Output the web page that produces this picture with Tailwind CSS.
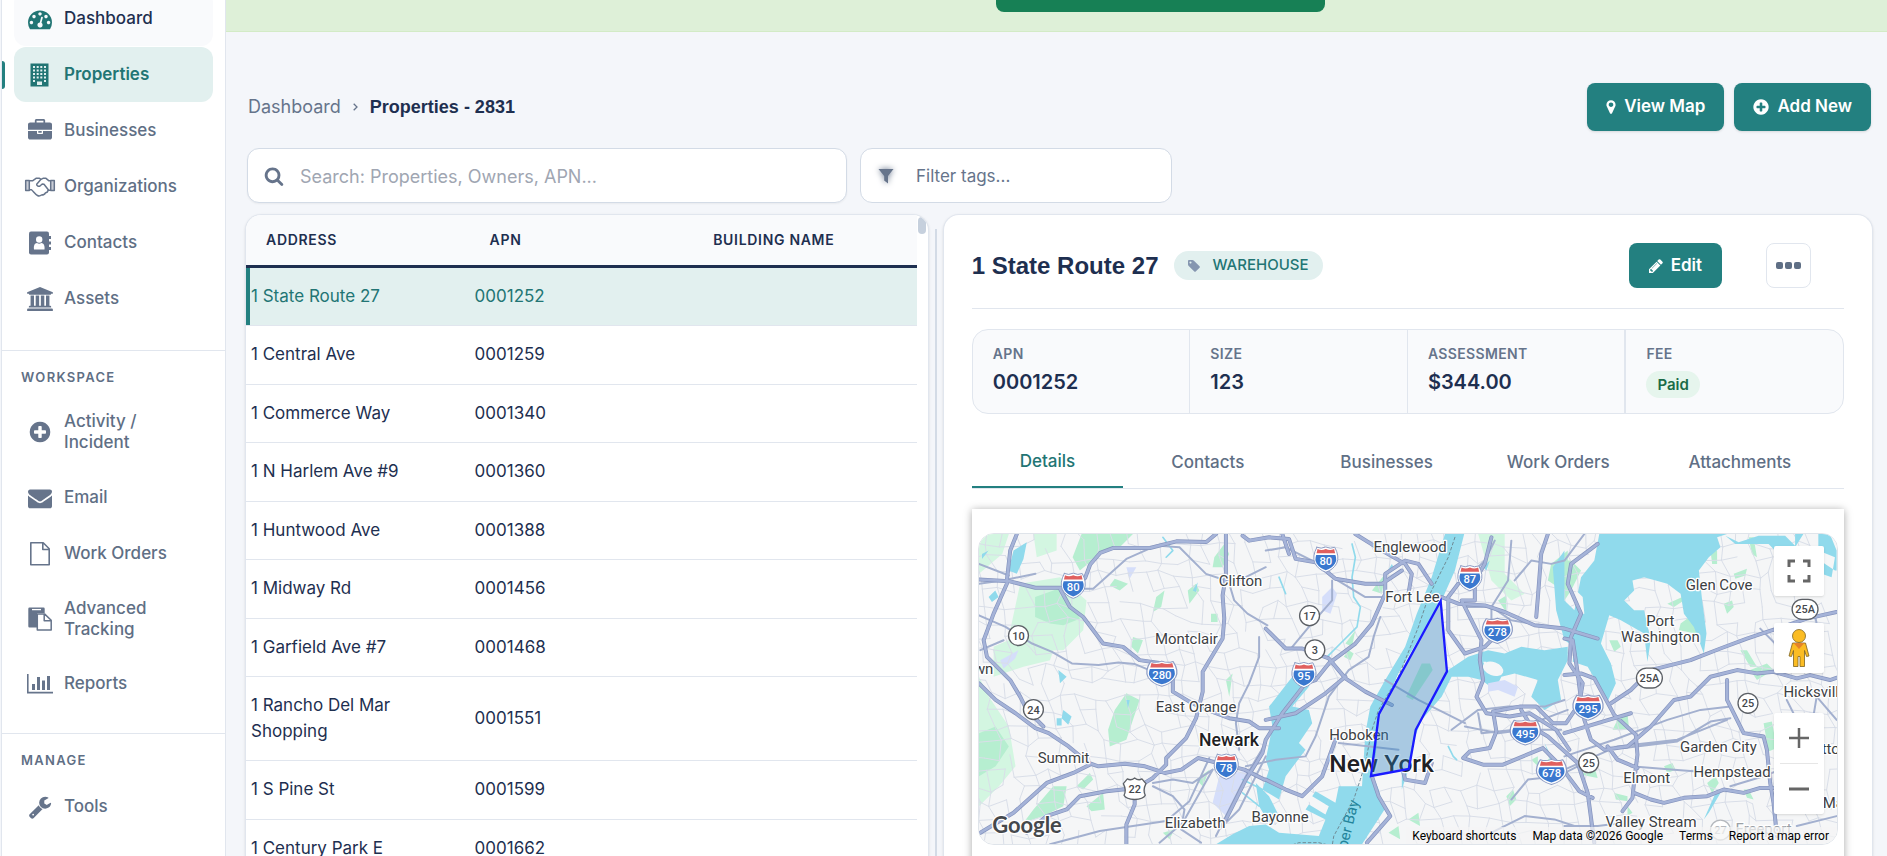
<!DOCTYPE html>
<html lang="en">
<head>
    <meta charset="UTF-8">
    <meta name="viewport" content="width=device-width, initial-scale=1.0">
    <title>Properties</title>
    <script src="https://cdn.jsdelivr.net/npm/@tailwindcss/browser@4"></script>
</head>
<body class="bg-[#f4f6fa] font-['Inter',sans-serif] text-[17px] text-[#1e2f50]">
<div class="flex h-screen overflow-hidden">

    <!-- Sidebar -->
    <aside class="ml-px flex w-[225px] shrink-0 flex-col border-x border-[#e1e6ee] bg-white text-[#5f6f85]">
        <nav class="-mt-[9px] flex flex-col gap-px pr-3 pl-3 font-medium leading-[21px]">
            <a href="#" class="flex min-h-[55px] items-center gap-3 rounded-xl bg-[#f9fafc] px-3.5 text-[#1e2f50]">
                <svg class="h-6 w-6 shrink-0 fill-[#227574]" viewBox="0 0 1792 1792"><path d="M384 1152q0-53-37.500-90.500t-90.500-37.500-90.500 37.500-37.500 90.500 37.500 90.500 90.500 37.500 90.500-37.500 37.500-90.500zm192-448q0-53-37.500-90.500t-90.500-37.500-90.500 37.500-37.500 90.500 37.500 90.500 90.500 37.500 90.500-37.500 37.500-90.500zm428 481l101-382q6-26-7.500-48.500t-38.500-29.500-48 6.500-30 39.500l-101 382q-60 5-107 43.500t-63 98.500q-20 77 20 146t117 89 146-20 89-117q16-60-6-117t-72-91zm660-33q0-53-37.500-90.500t-90.500-37.500-90.500 37.500-37.500 90.500 37.500 90.500 90.500 37.500 90.500-37.500 37.500-90.500zm-640-640q0-53-37.500-90.500t-90.500-37.500-90.500 37.500-37.500 90.500 37.500 90.500 90.500 37.500 90.500-37.500 37.500-90.500zm448 192q0-53-37.500-90.500t-90.500-37.500-90.500 37.500-37.500 90.500 37.500 90.500 90.500 37.500 90.500-37.500 37.500-90.500zm320 448q0 261-141 483-19 29-54 29h-1402q-35 0-54-29-141-221-141-483 0-182 71-348t191-286 286-191 348-71 348 71 286 191 191 286 71 348z"/></svg>
                Dashboard
            </a>
            <a href="#" class="relative flex min-h-[55px] items-center gap-3 rounded-xl bg-[#e2f0ef] px-3.5 font-semibold text-[#227574]">
                <span class="absolute top-3.5 -left-3 h-7 w-[3px] rounded-r bg-[#238080]"></span>
                <svg class="h-6 w-6 shrink-0 fill-[#227574]" viewBox="0 0 24 24"><path fill-rule="evenodd" d="M2.500 0.500h18v23h-18zM5 3v2h2V3zM8.700 3v2h2V3zM12.300 3v2h2V3zM16 3v2h2V3zM5 6.500v2h2v-2zM8.700 6.500v2h2v-2zM12.300 6.500v2h2v-2zM16 6.500v2h2v-2zM5 10v2h2v-2zM8.700 10v2h2v-2zM12.300 10v2h2v-2zM16 10v2h2v-2zM5 13.500v2h2v-2zM8.700 13.500v2h2v-2zM12.300 13.500v2h2v-2zM16 13.500v2h2v-2zM5 17v2h2v-2zM16 17v2h2v-2zM9 18.500v3.500h5v-3.500z"/></svg>
                Properties
            </a>
            <a href="#" class="flex min-h-[55px] items-center gap-3 px-3.5">
                <svg class="h-6 w-6 shrink-0 fill-[#66748b]" viewBox="0 0 1792 1792"><path d="M640 256h512v-128h-512v128zm1152 640v480q0 66-47 113t-113 47h-1472q-66 0-113-47t-47-113v-480h672v160q0 26 19 45t45 19h320q26 0 45-19t19-45v-160h672zm-768 0v128h-256v-128h256zm768-480v384h-1792v-384q0-66 47-113t113-47h352v-160q0-40 28-68t68-28h576q40 0 68 28t28 68v160h352q66 0 113 47t47 113z"/></svg>
                Businesses
            </a>
            <a href="#" class="flex min-h-[55px] items-center gap-3 px-3.5">
                <svg class="h-6 w-6 shrink-0 overflow-visible" viewBox="0 0 24 24" fill="none" stroke="#66748b" stroke-width="1.500" stroke-linejoin="round"><path d="M-2.300 5.500h3.600v10h-3.600zM22.700 5.500h3.600v10h-3.600z" fill="#66748b" fill-opacity=".35"/><path d="M1 5.800h3.500l3.500-2.500h3.500l1.500 1L15 3.300h3l3 2.500h2M1 14.800h2.500c2 1.700 3.500 4.500 6 5.700 1.500.8 3 .3 4-.5 2.500 0 3.500-.8 4-2.300 1.500 0 2.300-1 2.500-2.400h3M13 4.300l-4.300 5c-.4 1 1.700 2.400 3 1.900l2.500-2.200 1.800.2 4.500 5.800"/></svg>
                Organizations
            </a>
            <a href="#" class="flex min-h-[55px] items-center gap-3 px-3.5">
                <svg class="h-6 w-6 shrink-0" viewBox="0 0 24 24"><rect x="1" y="0.500" width="20" height="23" rx="2" fill="#66748b"/><path d="M20 5h3v3h-3zM20 10.500h3v3h-3zM20 16h3v3h-3z" fill="#66748b"/><path d="M6 18.500c-.5-4 .7-6.300 3-6.500 1.300 1 3 1 4.300 0 2.300.2 3.700 2.500 3.200 6.500z" fill="#fff"/><circle cx="11.200" cy="8.500" r="3.200" fill="#fff"/></svg>
                Contacts
            </a>
            <a href="#" class="flex min-h-[55px] items-center gap-3 px-3.5">
                <svg class="h-6 w-6 shrink-0 overflow-visible fill-[#66748b]" viewBox="64 0 1792 1792"><path d="M960 0l960 384v128h-128q0 26-20.500 45t-48.500 19h-1526q-28 0-48.500-19t-20.500-45h-128v-128zm-704 640h256v768h128v-768h256v768h128v-768h256v768h128v-768h256v768h59q28 0 48.500 19t20.500 45v64h-1664v-64q0-26 20.500-45t48.500-19h59v-768zm1595 960q28 0 48.500 19t20.500 45v128h-1920v-128q0-26 20.500-45t48.500-19h1782z"/></svg>
                Assets
            </a>
        </nav>

        <div class="mt-6 border-t border-[#e1e6ee] px-[19px] pt-4 pb-1.5 text-[13px] leading-[21px] font-semibold tracking-widest">WORKSPACE</div>
        <nav class="flex flex-col gap-px pr-3 pl-3 font-medium leading-[21px]">
            <a href="#" class="flex min-h-[75px] items-center gap-3 px-3.5">
                <svg class="h-6 w-6 shrink-0 fill-[#66748b]" viewBox="0 0 1792 1792"><path d="M1344 960v-128q0-26-19-45t-45-19h-256v-256q0-26-19-45t-45-19h-128q-26 0-45 19t-19 45v256h-256q-26 0-45 19t-19 45v128q0 26 19 45t45 19h256v256q0 26 19 45t45 19h128q26 0 45-19t19-45v-256h256q26 0 45-19t19-45zm320-64q0 209-103 385.500t-279.500 279.500-385.500 103-385.500-103-279.500-279.500-103-385.500 103-385.500 279.500-279.500 385.500-103 385.500 103 279.500 279.500 103 385.500z"/></svg>
                <span>Activity /<br>Incident</span>
            </a>
            <a href="#" class="flex min-h-[55px] items-center gap-3 px-3.5">
                <svg class="h-6 w-6 shrink-0 fill-[#66748b]" viewBox="0 0 1792 1792"><path d="M1792 710v794q0 66-47 113t-113 47h-1472q-66 0-113-47t-47-113v-794q44 49 101 87 362 246 497 345 57 42 92.500 65.500t94.500 48 110 24.500h2q51 0 110-24.500t94.500-48 92.500-65.500q170-123 498-345 57-39 100-87zm0-294q0 79-49 151t-122 123q-376 261-468 325-10 7-42.500 31t-54 38.500-52 32.500-57.500 27-50 9h-2q-23 0-50-9t-57.500-27-52-32.500-54-38.500-42.500-31q-91-64-262-182.500t-205-142.500q-62-42-117-115.500t-55-136.500q0-78 41.500-130t118.500-52h1472q65 0 112.500 47t47.500 113z"/></svg>
                Email
            </a>
            <a href="#" class="flex min-h-[55px] items-center gap-3 px-3.5">
                <svg class="h-6 w-6 shrink-0" viewBox="0 0 24 24" fill="none" stroke="#66748b" stroke-width="1.600" stroke-linejoin="round"><path d="M2.800 0.800h12.400l6 6v16H2.800zM14.800 1v6.500H21"/></svg>
                Work Orders
            </a>
            <a href="#" class="flex min-h-[73px] items-center gap-3 px-3.5">
                <svg class="h-6 w-6 shrink-0" viewBox="0 0 24 24"><path d="M1.500 0.500h14q1.200 0 1.200 1.200V6H10q-1 0-1 1v13.500H1.500Q.3 20.500.3 19.300V1.700Q.3.500 1.500.5z" fill="#66748b"/><path d="M4 2.600h9" stroke="#fff" stroke-width="1.300"/><path d="M9.300 6.900h7.200l6.700 6.300v9.900H9.300zM16.200 7.200v6.500h6.800" fill="#fff" stroke="#66748b" stroke-width="1.500" stroke-linejoin="round"/></svg>
                <span>Advanced<br>Tracking</span>
            </a>
            <a href="#" class="flex min-h-[55px] items-center gap-3 px-3.5">
                <svg class="h-6 w-6 shrink-0 overflow-visible fill-[#66748b]" viewBox="0 0 24 24"><path d="M-1 2h1.600v17.700H25v1.700H-1zM4 12h3v6H4zM9 5h3v13H9zM14 8.500h3V18h-3zM19 4h3v14h-3z"/></svg>
                Reports
            </a>
        </nav>

        <div class="mt-[22px] border-t border-[#e1e6ee] px-[19px] pt-4 pb-2 text-[13px] leading-[21px] font-semibold tracking-widest">MANAGE</div>
        <nav class="flex flex-col pr-3 pl-3 font-medium leading-[21px]">
            <a href="#" class="flex min-h-[55px] items-center gap-3 px-3.5">
                <svg class="h-6 w-6 shrink-0 fill-[#66748b]" viewBox="0 0 1792 1792"><path d="M448 1472q0-26-19-45t-45-19-45 19-19 45 19 45 45 19 45-19 19-45zm644-420l-682 682q-37 37-90 37-52 0-91-37l-106-108q-38-36-38-90 0-53 38-91l681-681q39 98 114.500 173.500t173.500 114.500zm634-435q0 39-23 106-47 134-164.500 217.500t-258.500 83.500q-185 0-316.500-131.500t-131.500-316.500 131.500-316.500 316.500-131.500q58 0 121.500 16.500t107.500 46.500q16 11 16 28t-16 28l-293 169v224l193 107q5-3 79-48.500t135.500-81 70.500-35.500q15 0 23.500 10t8.500 25z"/></svg>
                Tools
            </a>
        </nav>
    </aside>

    <!-- Main -->
    <main class="flex min-w-0 flex-1 flex-col">
        <div class="flex h-8 shrink-0 items-start justify-center border-b border-[#d3ebc6] bg-[#def0d8] pl-52">
            <button type="button" aria-label="Notice" class="h-3 w-[329px] rounded-b-lg bg-[#178055]"></button>
        </div>

        <header class="mt-[51px] flex h-12 shrink-0 items-center justify-between pr-4 pl-[22px]">
            <div class="flex items-center gap-3">
                <a href="#" class="text-lg leading-6 text-[#66748b]">Dashboard</a>
                <svg class="h-2 w-[5px]" viewBox="0 0 5 8" fill="none" stroke="#66748b" stroke-width="1.300"><path d="M.7.7L4 4 .7 7.300"/></svg>
                <h1 class="font-['Liberation_Sans',sans-serif] text-lg leading-6 font-bold">Properties - 2831</h1>
            </div>
            <div class="flex gap-2.5 font-semibold text-white">
                <button type="button" class="flex h-12 items-center gap-2 rounded-lg bg-[#238080] px-[19px] shadow-sm">
                    <svg class="h-4 w-2.5 fill-white" viewBox="384 0 1024 1792"><path d="M1152 640q0-106-75-181t-181-75-181 75-75 181 75 181 181 75 181-75 75-181zm256 0q0 109-33 179l-364 774q-16 33-47.500 52t-67.500 19-67.500-19-46.500-52l-365-774q-33-70-33-179 0-212 150-362t362-150 362 150 150 362z"/></svg>
                    View Map
                </button>
                <button type="button" class="flex h-12 items-center gap-2 rounded-lg bg-[#238080] px-[19px] shadow-sm">
                    <svg class="h-4 w-4 fill-white" viewBox="96 96 1600 1600"><path d="M1344 960v-128q0-26-19-45t-45-19h-256v-256q0-26-19-45t-45-19h-128q-26 0-45 19t-19 45v256h-256q-26 0-45 19t-19 45v128q0 26 19 45t45 19h256v256q0 26 19 45t45 19h128q26 0 45-19t19-45v-256h256q26 0 45-19t19-45zm320-64q0 209-103 385.500t-279.500 279.500-385.500 103-385.500-103-279.500-279.500-103-385.500 103-385.500 279.500-279.500 385.500-103 385.500 103 279.500 279.500 103 385.500z"/></svg>
                    Add New
                </button>
            </div>
        </header>

        <div class="mt-[17px] flex h-[55px] shrink-0 gap-[13px] pl-[21px]">
            <label class="flex w-[600px] items-center rounded-xl border border-[#d3dbe6] bg-white pl-4 shadow-xs">
                <svg class="h-5 w-5 shrink-0 fill-[#66748b]" viewBox="0 0 1792 1792"><path d="M1216 832q0-185-131.500-316.500t-316.500-131.500-316.500 131.500-131.500 316.500 131.500 316.500 316.500 131.500 316.500-131.500 131.500-316.500zm512 832q0 52-38 90t-90 38q-54 0-90-38l-343-342q-179 124-399 124-143 0-273.500-55.500t-225-150-150-225-55.500-273.500 55.500-273.500 150-225 225-150 273.500-55.500 273.500 55.500 225 150 150 225 55.500 273.500q0 220-124 399l343 343q37 37 37 90z"/></svg>
                <span class="sr-only">Search</span>
                <input type="text" placeholder="Search: Properties, Owners, APN..." class="ml-4 h-full w-full bg-transparent pt-0.5 text-lg outline-none placeholder:text-[#a0a6b2]">
            </label>
            <label class="flex w-[312px] items-center rounded-xl border border-[#d3dbe6] bg-white pl-[17px]">
                <svg class="h-4 w-4 shrink-0 fill-[#66748b] drop-shadow-[0_0_3px_#66748b]" viewBox="0 0 16 16"><path d="M.5 1h15L10 8v7.500L6.200 12.500V8z"/></svg>
                <span class="sr-only">Filter tags</span>
                <input type="text" placeholder="Filter tags..." class="ml-[22px] h-full w-full bg-transparent outline-none placeholder:text-[#66748b]">
            </label>
        </div>

        <div class="mt-[11px] flex min-h-0 flex-1 pr-3.5 pl-[19px]">

            <!-- Property list -->
            <section class="relative w-[42%] shrink-0 overflow-hidden rounded-t-2xl border-x border-t border-[#e1e6ee] bg-white pr-[11px] shadow-sm">
                <table class="w-full table-fixed border-collapse text-left">
                    <thead>
                        <tr class="h-[51px] border-b-[3px] border-[#1e2f50] bg-[#f9fafc] text-sm font-semibold tracking-wider">
                            <th class="px-5 font-semibold">ADDRESS</th>
                            <th class="px-5 font-semibold">APN</th>
                            <th class="px-5 font-semibold">BUILDING NAME</th>
                        </tr>
                    </thead>
                    <tbody id="rows"></tbody>
                </table>
                <div class="absolute top-0.5 right-0.5 h-[17px] w-2 rounded-full bg-[#c6d0dd]"></div>
            </section>

            <div class="flex w-3.5 shrink-0 justify-center pt-[15px]"><div class="w-0.5 bg-[#d3dbe6]"></div></div>

            <!-- Property details -->
            <section class="min-w-0 flex-1 overflow-hidden rounded-t-2xl border-x border-t border-[#e1e6ee] bg-white px-7 shadow-sm">
                <div class="flex h-[94px] items-center border-b border-[#e1e6ee] pt-2">
                    <h2 class="font-['Liberation_Sans',sans-serif] text-2xl font-bold">1 State Route 27</h2>
                    <span class="ml-4 flex h-[29px] items-center gap-3 rounded-full bg-[#e2f0ef] px-3.5 text-[15px] font-medium text-[#227574]">
                        <svg class="h-3 w-3 fill-[#8596b0]" viewBox="128 128 1536 1536"><path d="M576 448q0-53-37.500-90.500t-90.500-37.500-90.500 37.500-37.500 90.500 37.500 90.500 90.500 37.500 90.500-37.500 37.500-90.500zm1067 576q0 53-37 90l-491 492q-39 37-91 37-53 0-90-37l-715-716q-38-37-64.500-101t-26.500-117v-416q0-52 38-90t90-38h416q53 0 117 26.500t102 64.500l715 714q37 39 37 91z"/></svg>
                        WAREHOUSE
                    </span>
                    <button type="button" class="ml-auto flex h-[45px] items-center gap-2 rounded-lg bg-[#238080] px-5 font-semibold text-white">
                        <svg class="h-3.5 w-3.5 fill-white" viewBox="128 128 1536 1536"><path d="M491 1536l91-91-235-235-91 91v107h128v128h107zm523-928q0-22-22-22-10 0-17 7l-542 542q-7 7-7 17 0 22 22 22 10 0 17-7l542-542q7-7 7-17zm-54-192l416 416-832 832h-416v-416zm683 96q0 53-37 90l-166 166-416-416 166-165q36-38 90-38 53 0 91 38l235 234q37 39 37 91z"/></svg>
                        Edit
                    </button>
                    <button type="button" aria-label="More" class="mr-[33px] ml-11 flex h-[45px] w-[45px] items-center justify-center rounded-lg border border-[#e1e6ee]">
                        <svg class="h-[7px] w-[25px] fill-[#5f6f85]" viewBox="0 0 25 7"><rect width="7" height="7" rx="2"/><rect x="9" width="7" height="7" rx="2"/><rect x="18" width="7" height="7" rx="2"/></svg>
                    </button>
                </div>

                <dl class="mt-5 grid h-[85px] grid-cols-4 divide-x divide-[#e1e6ee] rounded-2xl border border-[#e1e6ee] bg-[#f9fafc]">
                    <div class="px-5 pt-3.5"><dt class="text-sm leading-5 font-semibold tracking-wide text-[#66748b]">APN</dt><dd class="mt-1 text-xl leading-7 font-semibold">0001252</dd></div>
                    <div class="px-5 pt-3.5"><dt class="text-sm leading-5 font-semibold tracking-wide text-[#66748b]">SIZE</dt><dd class="mt-1 text-xl leading-7 font-semibold">123</dd></div>
                    <div class="px-5 pt-3.5"><dt class="text-sm leading-5 font-semibold tracking-wide text-[#66748b]">ASSESSMENT</dt><dd class="mt-1 text-xl leading-7 font-semibold">$344.00</dd></div>
                    <div class="border-l border-[#e1e6ee] px-5 pt-3.5"><dt class="text-sm leading-5 font-semibold tracking-wide text-[#66748b]">FEE</dt><dd class="mt-[7px] flex"><span class="rounded-full bg-[#e6f5ed] px-[11px] text-[15px] leading-[27px] font-semibold text-[#1a6b48]">Paid</span></dd></div>
                </dl>

                <div role="tablist" class="mt-5 flex h-[55px] border-b border-[#e1e6ee] font-medium text-[#5f6f85]">
                    <button type="button" role="tab" aria-selected="true" class="border-b-2 border-[#238080] px-12 pt-1 text-[#227574]">Details</button>
                    <button type="button" role="tab" class="px-12 pt-1">Contacts</button>
                    <button type="button" role="tab" class="px-12 pt-1">Businesses</button>
                    <button type="button" role="tab" class="px-[26px] pt-1">Work Orders</button>
                    <button type="button" role="tab" class="flex-1 pt-1">Attachments</button>
                </div>

                <div class="mt-5 h-[400px] bg-white px-1.5 pt-6 shadow-[0_1px_8px_rgba(0,0,0,0.35)]">
                    <div class="relative h-[312px] overflow-hidden rounded-2xl border border-[#dfe4ea]">
                        <svg class="block h-full w-full" viewBox="36 99 2586 936" preserveAspectRatio="xMidYMid slice" stroke-linejoin="round" stroke-linecap="round">
                            <defs>
                                <g id="interstate">
                                    <path d="M-27-36Q-14-30 0-37 14-30 27-36 42-8 33 12 22 32 0 39-22 32-33 12-42-8-27-36z" fill="#fff" stroke="#8d9cc4" stroke-width="3"/>
                                    <path d="M-29-13H29Q34 2 28 12 19 27 0 33-19 27-28 12-34 2-29-13z" fill="#3a78cf"/>
                                    <path d="M-25-31Q-13-25 0-31 13-25 25-31L28-18H-28z" fill="#e0605f"/>
                                </g>
                            </defs>
                            <rect x="0" y="0" width="2700" height="1100" fill="#f5f6f7"/>

                            <!-- parks -->
                            <g fill="#d3f6e1">
                                <path d="M36 100h90l-20 60-70 60zM160 250l120-20 80 70-10 90-60 60-90 0-70-60zM80 440l90-40 100 20-20 60-80 20-90 30z"/>
                                <path d="M36 530l30 60 60 90 20 120-50 60-60 60zM200 100h70v50l-60 20zM1540 100h80v120l60 60-40 20-60-60zM1700 500l60 50-30 20z"/>
                            </g>
                            <g fill="#b6eed0">
                                <path d="M345 100h155l-40 40-60 20-60 50-22-40zM205 290l70-25 50 60 15 30-50 20-40-5-45-20zM36 700l50-20 40 60-40 60-50 30zM200 930l60-70 40 0-10 60-60 30-60 20zM480 580l40 20-20 60-20 60-50 20-5-50 20-60z"/>
                                <path d="M445 235l40 15-25 20-30-15zM570 290l25-20-10 50-25 15zM665 270l25-20 10 20-30 40zM745 170l30-40 15 30-20 40-30 0zM735 340h20v25h-20zM500 410l30 10-15 40-20-20zM780 540l20-20-10 70zM330 860l40-40 10 20-30 30zM360 920l50-40 5 50-40 5zM690 840l40-30-20 50zM590 1000l35-10-15 30z"/>
                                <path d="M1150 450l15 10-10 20-20-10zM1140 430l30-40-10 50zM1220 270l40-50-10 60zM1600 300l25-15v50zM1625 890l20-20 10 30-20 20zM1700 780l20-10v30zM1740 790l20-20-5 50zM1850 800l40 0 10 35-50-10zM1270 1000l30-20 5 40zM1330 960l30-20 5 40zM1760 190l50-40v130l-60-40z"/>
                                <path d="M2110 310l45-20 5 10-30 20zM2150 370l40-30 15 50-10 10-50-10zM2310 220l40-15-5 20-30 10zM2355 110l15 0 10 60-15-10zM2240 150l20 0 0 40-15 0zM2280 310l25-10 5 20-20 20zM2330 450l20 0 30 50-20 0zM2360 510l50-20 20 20-50 30zM2400 670l25-5 15 80-25 10zM1935 420l25 0 10 20-20 15zM1960 660l30-20 5 50-50 0zM2100 800l25-10 10 20-25 10zM1950 880l40 10v15l-35-5zM1990 920l15 20-15 10zM2340 870l15 0 15 30-20-5zM2230 850l25-20 10 20-20 30zM1800 180l20 0 30 30-30 60-20 30zM1885 270l15-10 0 50z"/>
                            </g>
                            <g fill="#d5defa">
                                <path d="M760 830l90-20-70 140-40-40zM480 200l30 0-20 35zM100 480l55-30-10 25-35 30z"/>
                                <path d="M1070 290l30-30 15 20-20 60-25-10z"/>
                            </g>

                            <!-- local streets, filled in by the script below -->
                            <path id="streets" d="" fill="none" stroke="#d9dee8" stroke-width="3"/>

                            <!-- water -->
                            <g fill="#90daec">
                                <path d="M1440 100H1498L1470 210 1430 300 1300 520 1240 650 1235 740 1222 825 1240 870 1258 930 1190 1035H750L800 1005 850 980 900 975 940 1000 1060 1010 1080 960 1020 930 1030 915 1080 945 1090 920 1040 890 1050 875 1110 910 1120 860 1190 860 1200 700 1215 620 1260 540 1320 440 1355 340 1400 230z"/>
                                <path d="M980 530l40-10 10 40-50 60 50 10 10 40-40 60 20 20-60 80-20 70-50-30 20-60-10-30 20-100-10-60zM870 850l40 40 30 60-30 20-30-50z"/>
                                <path d="M1310 820l30-130 60-90 50-90 60-40 60-20 50 10 50-20 70 10 70-10v40l-30 60 10 60-50 30-20-20-20-20 20-50-70-20-40 10-20 40-40-30-40-10-50 0-30 60-60 70-20 50-20 100-20 60z"/>
                                <path d="M1905 100H2290L2260 110 2270 140 2235 170 2205 210 2215 300 2228 400 2220 460 2190 380 2160 340 2150 280 2110 250 2040 230 2005 240 2010 270 1980 300 2010 330 2040 330 2060 420 2050 485 2040 400 1970 360 1935 345 1910 430 1940 490 1955 550 1930 605 1905 560 1870 500 1825 485 1830 440 1800 420 1775 330 1765 200 1800 150 1800 300 1830 330 1850 230 1890 180z"/>
                                <path d="M2285 105l40 20 60-20 80 0 30 30 0-40 70 5v50l50 20-10 60-30-10-10-60-60-10-40 30-50-50-100 0zM2495 140l60 30 60 40 5 0v-60l-20-50h-80z"/>
                                <path d="M140 150l40-25-10 50-20 45-25-10zM65 290l20-20 10 20-20 15zM275 510l25 20-20 20zM290 630l25 20-10 25-20-20zM270 655l15 0v22h-15zM45 160l20-10-20 25zM680 270l15-25-5 30zM480 600l10 0-5 25z"/>
                                <path d="M1740 730l30 60-10 0zM2220 960l40-90 10 10-35 60zM1250 240l30-50 5 10zM1555 200l20-20-10 30z"/>
                            </g>
                            <g fill="none" stroke="#90daec" stroke-width="5">
                                <path d="M1160 130l10 40-10 60 5 60 20 30-10 60-50 50-40 40M830 880l50 40M830 840l60 30M590 110l30 40-20 20M1450 740l15 30 10 10M940 230l20 50"/>
                            </g>
                            <g fill="#f5f6f7"><ellipse cx="1585" cy="506" rx="32" ry="20" transform="rotate(20 1585 506)"/><path d="M1835 270l20 20 5 50-10 0-20-40zM1850 170l15-15-5 30-10 0zM1555 485l10 0-5 12z"/></g>
                            <path d="M1570 550l50-10 40 20-10 30-50-20-30 5z" fill="#d5defa"/>

                            <!-- Manhattan -->
                            <path d="M1428 300L1445 520 1350 690 1325 810 1225 825 1235 740 1245 650 1300 520z" fill="#eef0f3"/>
                            <path d="M1370 490l25 0 8 20-60 90-20-10z" fill="#b6eed0"/>

                            <path d="M1470 110l-20 60-60 120-30 90-60 150-60 100-20 60-20 100-15 50-20 60-60 110-5 30-40-10-60 0-60 20" fill="none" stroke="#6f8a94" stroke-width="3" stroke-dasharray="8 8"/>

                            <!-- secondary roads -->
                            <g fill="none" stroke="#a3b0cf" stroke-width="6">
                                <path d="M36 345l80 35 80 50 60 25 60 35 80 5 60-8 50 5 60 25 40-10M40 450l70-30M355 265h25l100-90 90-40 70 5 80 80 60 20 40 0 80-40"/>
                                <path d="M36 190l90 35M36 250l70-10 100-20M560 860l60 30 35 40-10 60 60 40M250 1035l150-40 200-30 70-60 60-130M790 250l15 50 40 40 60 35M880 410l0 60-30 80-30 60-10 60 10 80"/>
                                <path d="M560 850l60-10 60 10 60-40M740 810l-90 160-70 60M900 730l-60 100-90 180M900 770l-80 160-60 60"/>
                                <path d="M900 150l60-10 80 40 60 50 100 60 60 0M1100 240l0 60-70 80-50 60M1245 350l-20 60-15 60-60 40-60 80-40 120-30 60-90 10-90 20M1500 240l60-60 30-60M1500 320l80 0 60 40 60 10"/>
                                <path d="M1460 690l80-60 90-10 110 0 60-20M1540 640l10 60 100-10 160-60M1500 680l100 20 80-10 110 0M1260 540l100 60 80 40 60 30M1120 730l180 20M1580 1000l100-50 90 10 60 20"/>
                                <path d="M1800 770l150-50 160-60 100-30 90-10M1800 810l160-70 180-20 150-60M1640 900l50-60 90-10 60-30M1980 745l160-20 100-60 60-10M2390 385l50 50M2470 600l30 60M2620 660l-60-70M2500 790l-100 40-100 30M2000 800l130 10 60 5M2500 980l120-30M2550 650l10-60 40-30"/>
                                <path d="M2560 370l-10-50M1800 980h100l80-10M1640 120l-10 120-50 80 0 60M1860 100l-60 80-40 10-60-10-50 60"/>
                            </g>

                            <!-- highways -->
                            <g id="highways" fill="none">
                                <g stroke="#8493bd" stroke-width="12">
                                    <path id="hw1" d="M36 237l90 5 80 20 70 0 50 0 30-30 15-40 30-35 40-15h110l80-20 90 2 30-25M150 100l-20 50-10 90 0 10-40 90-30 80 10 50 70 70 30 50 20 40 50 50M36 550l50 50 60 40 60 45 40 15 60 40 60 50 30 10 80-8 60 8 60 20 50-10 50-35 60 15 80 20 60 30M280 265l30 55 40 30 60 80 60 10 50 40 70 10 30 40 0 45 50 30 40 20 80 30 60 10 30 20 60 0M40 1000l100-60 100-90 80-30 50-25M180 1000l60-50 60-20 40-40 80-15 90-10 50-30 40-40 0-20 60-60 30-60 20-80 0-60 60-100 5-60-5-70 10-60 0-160M480 1035l0-60 25-60 0-30"/>
                                    <path id="hw2" d="M780 960l60-120 50-80 10-40 50-80 70-90 30-10 40-50 80-60 50-60 40-90 0-60 60-40 40 10 40 60M830 105l20 15 60-10 60 5 20 60 60 10 60 50 90 15 50 0 60-40M1170 100l80 50 70 40 20 30-10 60M950 100l20 60M900 385l60 60 50 0 80 30 50 60 60 40 80 40M900 840l60 30 50 20 60-60 40-110M900 660l90-20 90-60 60-50M1580 110l-20 80-30 50 0 60-40 0 60 120-5 60 10 60-20 50 30 50 70 10 60-10 80 50 40 60"/>
                                    <path id="hw3" d="M1430 290l50 20 80 5 60 20 90 40 90 10 100 30M1480 250l-30 40 0 100 50 70 60-20 40-40M1750 100l-20 60-10 130-5 60M1900 130l-80 60-10 60 40 90-30 70-5 80 40 60-10 60-40 60-40 0-50-50-50 0-80 15 10 60-20 50-60 10-20 20 60 20 60 0 120-50 50 50 60 80 40 20M1670 630l30 50 50 30 90 80 30 90 20 150M1310 800l10 40 60 10 20-60M1220 830l20 60 35 60 -70 80"/>
                                    <path id="hw4" d="M1800 415l25 5 15 100 10 80 10 60 20 60 40 30 70-10 70-60 70-80 50-10 60-60 80-20 60 10 50-5 70 20 40-10 60 15 60-20 100-10 60-20M1800 525l50-5 40 15 60 110 65 60 5 60-10 80-5 50-30 40M1940 610l60-40 60-60 120-30 90-35 80-30 60-20 60-20 60-20 90-20M2290 540l0 60 20 40 30 60 60 10 10 40 10 100 10 60 10 100M2010 880l50 20 40 10 60-15 70-5 50-20 60 10 50-15 70 0M1800 700l100-30 100-30M1930 740l30 40 60 25"/>
                                </g>
                                <g stroke="#a5b3d8" stroke-width="8"><use href="#hw1"/><use href="#hw2"/><use href="#hw3"/><use href="#hw4"/></g>
                            </g>

                            <!-- place names -->
                            <g class="font-['Roboto',sans-serif]" fill="#3c4043" font-size="45" text-anchor="middle" stroke="#fff" stroke-width="8" paint-order="stroke">
                                <text x="824" y="258">Clifton</text>
                                <text x="661" y="432">Montclair</text>
                                <text x="690" y="635">East Orange</text>
                                <text x="789" y="740" font-size="53" font-weight="500" fill="#202124">Newark</text>
                                <text x="291" y="789">Summit</text>
                                <text x="687" y="985">Elizabeth</text>
                                <text x="943" y="969">Bayonne</text>
                                <text x="50" y="521">wn</text>
                                <text x="1335" y="153">Englewood</text>
                                <text x="1342" y="306">Fort Lee</text>
                                <text x="1181" y="722">Hoboken</text>
                                <text x="1249" y="816" font-size="74" font-weight="500" fill="#202124">New York</text>
                                <text x="2266" y="270">Glen Cove</text>
                                <text x="2089" y="378">Port</text>
                                <text x="2089" y="424">Washington</text>
                                <text x="2460" y="591" text-anchor="start">Hicksville</text>
                                <text x="2264" y="757">Garden City</text>
                                <text x="2305" y="833">Hempstead</text>
                                <text x="2048" y="850">Elmont</text>
                                <text x="2061" y="982">Valley Stream</text>
                                <text x="2400" y="1004" fill="#9aa0a6">Freeport</text>
                                <text x="2575" y="762" text-anchor="start">tto</text>
                                <text x="2578" y="925" text-anchor="start">Mass</text>
                            </g>
                            <text transform="translate(1145 1050) rotate(-76)" class="font-['Roboto',sans-serif]" font-size="45" fill="#23849b">per Bay</text>

                            <!-- route shields -->
                            <g>
                                <use href="#interstate" x="320" y="255"/>
                                <use href="#interstate" x="781" y="800"/>
                                <use href="#interstate" x="1081" y="176"/>
                                <use href="#interstate" x="1515" y="232"/>
                                <use href="#interstate" x="1015" y="524"/>
                                <use href="#interstate" transform="translate(587 520) scale(1.25 1)"/>
                                <use href="#interstate" transform="translate(1598 391) scale(1.25 1)"/>
                                <use href="#interstate" transform="translate(1682 697) scale(1.25 1)"/>
                                <use href="#interstate" transform="translate(1761 816) scale(1.25 1)"/>
                                <use href="#interstate" transform="translate(1871 622) scale(1.25 1)"/>
                            </g>
                            <g class="font-['Roboto',sans-serif]" font-size="34" font-weight="500" text-anchor="middle" fill="#fff">
                                <text x="320" y="272">80</text><text x="781" y="817">78</text><text x="1081" y="193">80</text><text x="1515" y="249">87</text><text x="1015" y="541">95</text>
                                <text x="587" y="537">280</text><text x="1598" y="408">278</text><text x="1682" y="714">495</text><text x="1761" y="833">678</text><text x="1871" y="639">295</text>
                            </g>
                            <g fill="#fff" stroke="#5c6066" stroke-width="4">
                                <circle cx="155" cy="406" r="30"/><circle cx="200" cy="629" r="30"/><circle cx="1032" cy="346" r="30"/><circle cx="1048" cy="449" r="30"/>
                                <circle cx="2353" cy="610" r="30"/><circle cx="1873" cy="789" r="30"/><circle cx="2270" cy="992" r="30" stroke="#b4b8bd"/>
                                <rect x="2017" y="504" width="78" height="60" rx="30"/><rect x="2486" y="297" width="78" height="60" rx="30"/>
                                <path d="M483 838q11 6 22-3 11 9 22 3l12 14q-10 20-2 35-6 12-32 13-26-1-32-13 8-15-2-35z"/>
                            </g>
                            <g class="font-['Roboto',sans-serif]" font-size="33" font-weight="500" text-anchor="middle" fill="#44474c">
                                <text x="155" y="418">10</text><text x="200" y="641">24</text><text x="1032" y="358">17</text><text x="1048" y="461">3</text><text x="2353" y="622">25</text><text x="1873" y="801">25</text>
                                <text x="2056" y="546">25A</text><text x="2525" y="339">25A</text><text x="505" y="879">22</text><text x="2270" y="1004" fill="#b4b8bd">27</text>
                            </g>

                            <!-- parcel outline -->
                            <path d="M1427 302L1446 514 1352 690 1331 808 1217 829 1241 643z" fill="#2f86c4" fill-opacity=".36" stroke="#1a1aff" stroke-width="7" stroke-linejoin="miter"/>

                            <text x="76" y="1001" class="font-['Lato',sans-serif]" font-size="66" font-weight="700" fill="#45484c" stroke="#fff" stroke-width="8" paint-order="stroke">Google</text>
                        </svg>

                        <button type="button" aria-label="Fullscreen" class="absolute top-3 right-[13px] flex h-[50px] w-[50px] items-center justify-center rounded-xs bg-white shadow">
                            <svg class="h-6 w-6" viewBox="0 0 24 24" fill="none" stroke="#666" stroke-width="3"><path d="M2 8V2h6M16 2h6v6M22 16v6h-6M8 22H2v-6"/></svg>
                        </button>
                        <button type="button" aria-label="Street View" class="absolute top-[89px] right-[13px] flex h-[50px] w-[50px] items-center justify-center rounded-xs bg-white shadow">
                            <svg class="h-[38px] w-[22px]" viewBox="0 0 22 38" stroke="#7d6321" stroke-width=".8" fill="#fbbc23"><path d="M4.500 14h13l3.500 13-2.500.5-2-6V37.500H12V27.500h-2v10H5.500v-16l-2 6L1 27z"/><path d="M5.500 14h11L11 20z" fill="#e5832a" stroke="none"/><circle cx="11" cy="7" r="6.500"/></svg>
                        </button>
                        <div class="absolute top-[179px] right-[13px] flex w-[50px] flex-col items-center rounded-xs bg-white shadow">
                            <button type="button" aria-label="Zoom in" class="flex h-[50px] w-full items-center justify-center"><svg class="h-5 w-5" viewBox="0 0 20 20" stroke="#666" stroke-width="2.500"><path d="M0 10h20M10 0v20"/></svg></button>
                            <div class="h-px w-[38px] bg-[#e6e6e6]"></div>
                            <button type="button" aria-label="Zoom out" class="flex h-[50px] w-full items-center justify-center"><svg class="h-5 w-5" viewBox="0 0 20 20" stroke="#666" stroke-width="3"><path d="M0 10h20"/></svg></button>
                        </div>
                        <div class="absolute right-0 bottom-0 flex h-[17px] items-center gap-4 bg-[#f5f5f5]/70 pr-2 pl-1.5 font-['Roboto',sans-serif] text-xs leading-4 whitespace-nowrap text-black">
                            <button type="button">Keyboard shortcuts</button>
                            <span>Map data ©2026 Google</span>
                            <a href="#">Terms</a>
                            <a href="#">Report a map error</a>
                        </div>
                    </div>
                </div>
            </section>
        </div>
    </main>
</div>

<script>
    const properties = [
        ['1 State Route 27', '0001252'],
        ['1 Central Ave', '0001259'],
        ['1 Commerce Way', '0001340'],
        ['1 N Harlem Ave #9', '0001360'],
        ['1 Huntwood Ave', '0001388'],
        ['1 Midway Rd', '0001456'],
        ['1 Garfield Ave #7', '0001468'],
        ['1 Rancho Del Mar Shopping', '0001551'],
        ['1 S Pine St', '0001599'],
        ['1 Century Park E', '0001662'],
    ];

    document.getElementById('rows').innerHTML = properties.map(([address, apn], i) => `
        <tr class="border-b border-[#e1e6ee] leading-normal ${i === 0 ? 'bg-[#e2f0ef] text-[#227574]' : ''}">
            <td class="py-4 pr-12 pl-[5px] ${i === 0 ? 'shadow-[inset_4px_0_0_#238080]' : ''}">${address}</td>
            <td class="py-4 pl-[5px]">${apn}</td>
            <td></td>
        </tr>`).join('');

    // Local street mesh: a jittered grid with a fixed seed
    let seed = 7;
    const rand = () => (seed = (seed * 16807) % 2147483647) / 2147483647;
    const step = 46, cols = 60, lines = 23;
    const pts = [];
    for (let r = 0; r < lines; r++) {
        pts.push([]);
        for (let c = 0; c < cols; c++) {
            pts[r].push([Math.round(c * step + r * 9 - 190 + rand() * 30), Math.round(r * step + 70 + rand() * 30)]);
        }
    }
    let d = '';
    for (let r = 0; r < lines; r++) {
        for (let c = 0; c < cols; c++) {
            if (c + 1 < cols && rand() < 0.75) d += `M${pts[r][c]}L${pts[r][c + 1]}`;
            if (r + 1 < lines && rand() < 0.75) d += `M${pts[r][c]}L${pts[r + 1][c]}`;
        }
    }
    document.getElementById('streets').setAttribute('d', d);
</script>
</body>
</html>
